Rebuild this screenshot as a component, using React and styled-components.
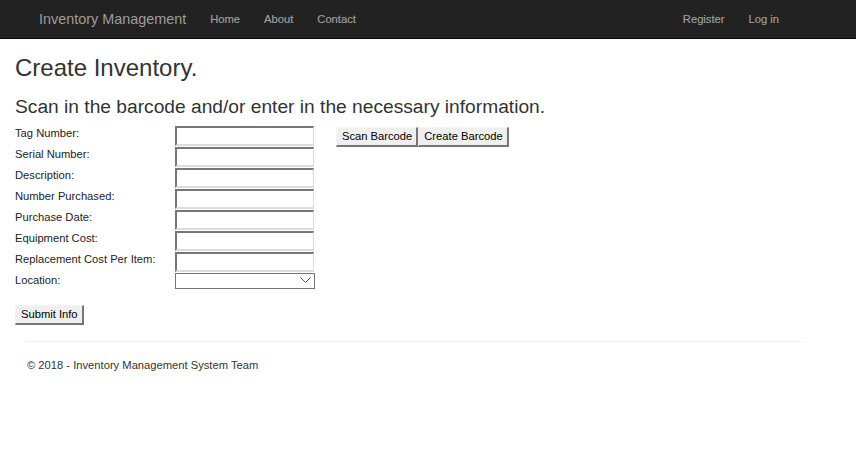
import React from 'react';
import styled, { createGlobalStyle } from 'styled-components';

const GlobalStyle = createGlobalStyle`
    html, body {
        margin: 0;
        padding: 0;
        background: #fff;
    }
    body {
        font-family: 'Liberation Sans', Arial, Helvetica, sans-serif;
        font-size: 11.2px;
        line-height: 1.42857;
        color: #333;
    }
    * {
        box-sizing: border-box;
    }
`;

const NavBar = styled.nav`
    height: 39px;
    background-color: #222;
    border-bottom: 1px solid #080808;
    display: flex;
    align-items: center;
    justify-content: space-between;
    padding: 0 65px 0 27px;
`;

const NavGroup = styled.div`
    display: flex;
    align-items: center;
`;

const Brand = styled.a`
    font-size: 14.4px;
    color: #9d9d9d;
    padding: 0 12px;
    text-decoration: none;
`;

const NavLink = styled.a`
    font-size: 11.2px;
    color: #9d9d9d;
    padding: 0 12px;
    text-decoration: none;
    -webkit-text-stroke: 0.2px #9d9d9d;
`;

const Main = styled.div`
    padding: 0 15px;
`;

const Title = styled.h2`
    font-size: 24px;
    font-weight: 500;
    line-height: 1.1;
    margin: 16px 0 8px;
`;

const SubTitle = styled.h3`
    font-size: 19.2px;
    font-weight: 500;
    line-height: 1.1;
    margin: 15px 0 8px;
`;

const FormArea = styled.div`
    display: flex;
    align-items: flex-start;
`;

const FieldList = styled.div`
    display: flex;
    flex-direction: column;
    gap: 1px;
`;

const FieldRow = styled.div`
    display: flex;
    align-items: flex-start;
    height: ${(p) => p.$height || 20}px;
`;

const Label = styled.label`
    width: 160px;
    font-size: 11.2px;
    line-height: 14px;
    color: #222;
`;

const TextBox = styled.input`
    width: 139px;
    height: 20px;
    border-style: solid;
    border-width: 2px 1px 2px 2px;
    border-color: #767676 #dcdcdc #dcdcdc #767676;
    background: #fff;
    padding: 0 2px;
    margin: 0;
    font-size: 11.2px;
`;

const SelectBox = styled.div`
    width: 140px;
    height: 16px;
    border: 1px solid #767676;
    background: #fff;
    display: flex;
    justify-content: flex-end;
    align-items: center;
    padding-right: 3px;
`;

const ButtonGroup = styled.div`
    display: flex;
    margin-left: 21px;
    margin-top: 1px;
`;

const Button = styled.button`
    font-family: 'Liberation Sans', Arial, sans-serif;
    font-size: 11.2px;
    color: #000;
    background: #efefef;
    height: 20px;
    padding: 0 4px 0 5px;
    margin: 0;
    border-style: solid;
    border-width: 1px 2px 2px 1px;
    border-color: #f4f4f4 #767676 #767676 #f4f4f4;
    line-height: 16px;
`;

const SubmitRow = styled.div`
    margin-top: 16px;
`;

const Footer = styled.footer`
    margin: 16px 53px 0 27px;
`;

const Rule = styled.hr`
    border: 0;
    border-top: 1px solid #eee;
    margin: 0 0 15px;
`;

const FooterText = styled.p`
    margin: 0;
    font-size: 11.2px;
    color: #333;
`;

const Chevron = () => (
    <svg width="11" height="7" viewBox="0 0 11 7">
        <path d="M0.5 0.5 L5.5 5.5 L10.5 0.5" fill="none" stroke="#555" strokeWidth="1" />
    </svg>
);

const fields = [
    'Tag Number:',
    'Serial Number:',
    'Description:',
    'Number Purchased:',
    'Purchase Date:',
    'Equipment Cost:',
    'Replacement Cost Per Item:',
];

const App = () => {
    return (
        <>
            <GlobalStyle />
            <NavBar>
                <NavGroup>
                    <Brand>Inventory Management</Brand>
                    <NavLink>Home</NavLink>
                    <NavLink>About</NavLink>
                    <NavLink>Contact</NavLink>
                </NavGroup>
                <NavGroup>
                    <NavLink>Register</NavLink>
                    <NavLink>Log in</NavLink>
                </NavGroup>
            </NavBar>
            <Main>
                <Title>Create Inventory.</Title>
                <SubTitle>Scan in the barcode and/or enter in the necessary information.</SubTitle>
                <FormArea>
                    <FieldList>
                        {fields.map((f) => (
                            <FieldRow key={f}>
                                <Label>{f}</Label>
                                <TextBox type="text" />
                            </FieldRow>
                        ))}
                        <FieldRow $height={16}>
                            <Label>Location:</Label>
                            <SelectBox>
                                <Chevron />
                            </SelectBox>
                        </FieldRow>
                    </FieldList>
                    <ButtonGroup>
                        <Button>Scan Barcode</Button>
                        <Button>Create Barcode</Button>
                    </ButtonGroup>
                </FormArea>
                <SubmitRow>
                    <Button>Submit Info</Button>
                </SubmitRow>
            </Main>
            <Footer>
                <Rule />
                <FooterText>© 2018 - Inventory Management System Team</FooterText>
            </Footer>
        </>
    );
};

export default App;
